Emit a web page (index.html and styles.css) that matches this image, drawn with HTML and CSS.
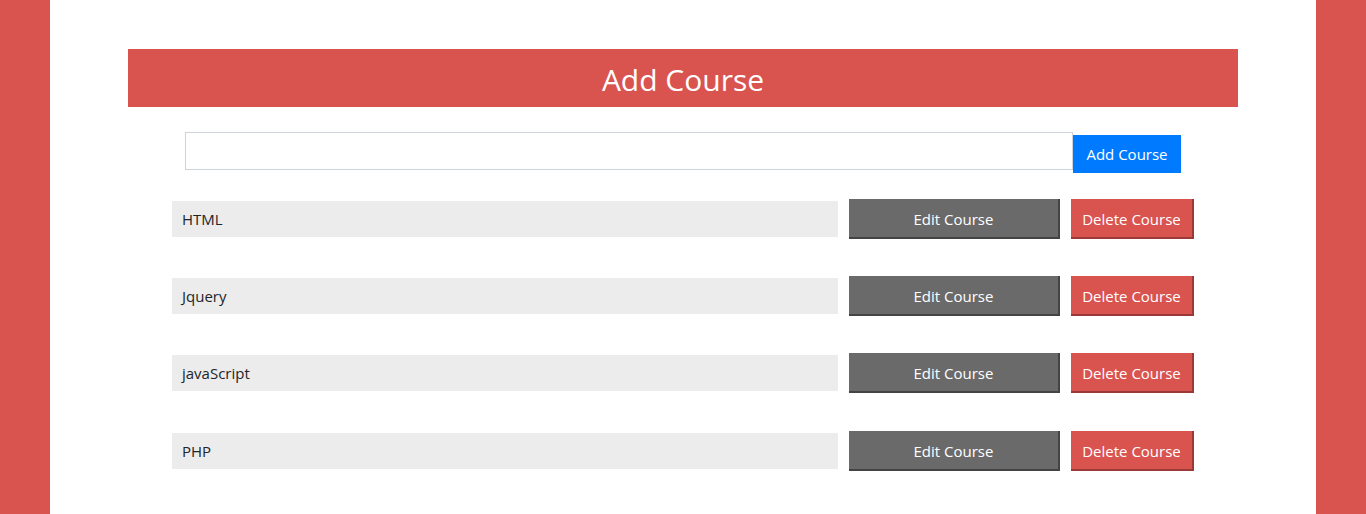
FILE: index.html
```html
<!DOCTYPE html>
<html>
<head>
<meta charset="utf-8">
<link rel="stylesheet" href="styles.css">
</head>
<body>
<div class="page">
  <h1 class="title">Add Course</h1>
  <form class="add-form">
    <input class="add-input" type="text">
    <button type="button" class="btn btn-add">Add Course</button>
  </form>
  <ul class="list">
    <li class="row">
      <div class="item">HTML</div>
      <button type="button" class="btn btn-edit">Edit Course</button>
      <button type="button" class="btn btn-delete">Delete Course</button>
    </li>
    <li class="row">
      <div class="item">Jquery</div>
      <button type="button" class="btn btn-edit">Edit Course</button>
      <button type="button" class="btn btn-delete">Delete Course</button>
    </li>
    <li class="row">
      <div class="item">javaScript</div>
      <button type="button" class="btn btn-edit">Edit Course</button>
      <button type="button" class="btn btn-delete">Delete Course</button>
    </li>
    <li class="row row-last">
      <div class="item">PHP</div>
      <button type="button" class="btn btn-edit">Edit Course</button>
      <button type="button" class="btn btn-delete">Delete Course</button>
    </li>
  </ul>
</div>
</body>
</html>
```
FILE: styles.css
```css
* { box-sizing: border-box; }
html, body { margin: 0; padding: 0; }
body {
  background: #d9534f;
  font-family: "Open Sans", "Noto Sans", sans-serif;
  color: #212529;
}
.page {
  width: 1266px;
  margin: 0 auto;
  background: #fff;
  min-height: 514px;
  padding-top: 49px;
  overflow: hidden;
}
.title {
  width: 1110px;
  height: 58px;
  margin: 0 auto;
  padding-top: 3px;
  background: #d9534f;
  color: #fff;
  font-weight: 400;
  font-size: 30px;
  line-height: 55px;
  text-align: center;
}
.add-form {
  display: flex;
  justify-content: center;
  align-items: flex-start;
  margin: 25px 0 0;
}
.add-input {
  width: 888px;
  height: 38px;
  border: 1px solid #ced4da;
  margin: 0;
  padding: 0 12px;
  font: inherit;
}
.btn {
  font-family: inherit;
  font-size: 15px;
  color: #fff;
  border: 0;
  margin: 0;
  padding: 0;
  cursor: pointer;
}
.btn-add {
  width: 108px;
  height: 38px;
  margin-top: 3px;
  background: #007bff;
}
.list {
  list-style: none;
  margin: 26px 0 0;
  padding: 0;
  display: flex;
  flex-direction: column;
  align-items: center;
  gap: 37px;
}
.row {
  display: flex;
  align-items: center;
  gap: 11px;
  width: 1022px;
  height: 40px;
}
.row-last { margin-top: 1px; }
.item {
  width: 666px;
  height: 36px;
  background: #ececec;
  padding: 1px 10px 0;
  line-height: 35px;
  font-size: 15px;
}
.btn-edit {
  width: 211px;
  height: 40px;
  padding-top: 2px;
  background: #6a6a6a;
  border-right: 2px solid #444;
  border-bottom: 2px solid #444;
}
.btn-delete {
  width: 123px;
  height: 40px;
  padding-top: 2px;
  background: #d9534f;
  border-right: 2px solid #9a3935;
  border-bottom: 2px solid #9a3935;
}
```
